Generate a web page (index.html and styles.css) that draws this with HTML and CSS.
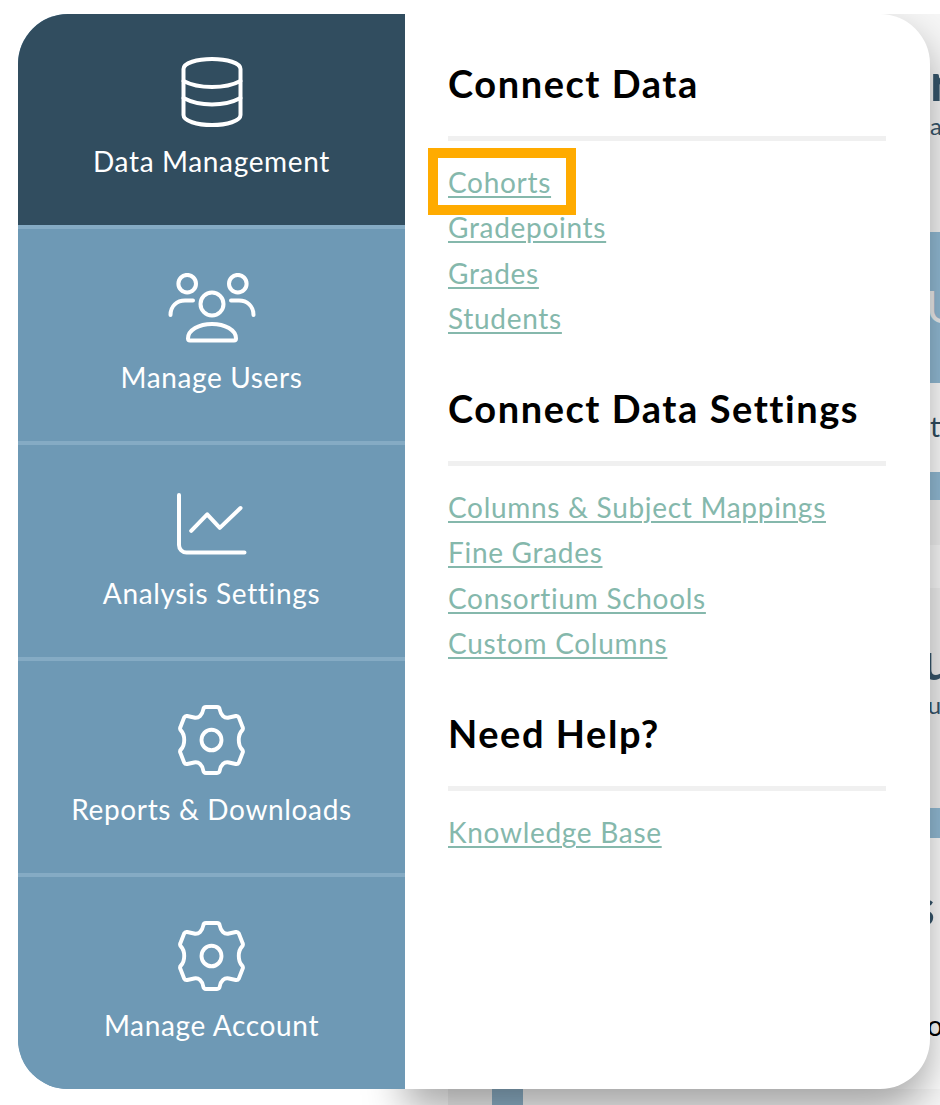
FILE: index.html
```html
<!DOCTYPE html>
<html lang="en">
<head>
    <meta charset="UTF-8">
    <title>Data Management Menu</title>
    <link rel="stylesheet" href="styles.css">
</head>
<body>
    <!-- page behind the menu, only a sliver shows on the right -->
    <div class="behind">
        <div class="strip strip-top">
            <div class="behind-title">r</div>
            <div class="behind-sub">a</div>
        </div>
        <div class="strip strip-band strip-hero"><span class="behind-hero">U</span></div>
        <div class="strip strip-white strip-ti"><span class="behind-text">ti</span></div>
        <div class="strip strip-band strip-thin"></div>
        <div class="strip strip-grey strip-gap"></div>
        <div class="strip strip-light strip-row"></div>
        <div class="strip strip-grey strip-stats">
            <div class="behind-title">u</div>
            <div class="behind-sub">lu</div>
        </div>
        <div class="strip strip-band strip-thin2"></div>
        <div class="strip strip-white strip-last">
            <div class="behind-title">s</div>
            <div class="behind-black">o</div>
        </div>
        <div class="behind-foot">
            <div class="foot-white"></div>
            <div class="foot-grey"></div>
            <div class="foot-blue"></div>
        </div>
    </div>

    <svg class="defs" width="0" height="0">
        <symbol id="icon-gear" viewBox="0 0 90 70">
            <g transform="translate(44.500 35) scale(.97 1)">
                <path d="M-5.5-33H5.5a3 3 0 0 1 3 2.5C9.5-25 13-21.5 18-22.5L25-24a3 3 0 0 1 3.2 1.5L32-13a3 3 0 0 1-.5 3.500C27-5 27 5 31.500 9.500a3 3 0 0 1 .5 3.500L28.200 22.500a3 3 0 0 1-3.200 1.500L18 22.500C13 21.500 9.500 25 8.500 30.500a3 3 0 0 1-3 2.500H-5.500a3 3 0 0 1-3-2.500C-9.500 25-13 21.500-18 22.500L-25 24a3 3 0 0 1-3.200-1.500L-32 13a3 3 0 0 1 .5-3.500C-27 5-27-5-31.500-9.500a3 3 0 0 1-.5-3.500L-28.200-22.500a3 3 0 0 1 3.200-1.500L-18-22.500C-13-21.500-9.500-25-8.500-30.500a3 3 0 0 1 3-2.500z"/>
                <circle cx="0" cy="0" r="10.300"/>
            </g>
        </symbol>
    </svg>

    <div class="menu">
        <nav class="side">
            <a class="side-item active" href="#">
                <svg class="side-icon" viewBox="0 0 90 70">
                    <path d="M16.500 12C16.500 6 30 2 45 2S73.500 6 73.500 12V58C73.500 64 60 68 45 68S16.500 64 16.500 58Z"/>
                    <path d="M16.500 24C24 28 34 30 45 30S66 28 73.500 24"/>
                    <path d="M16.500 41C24 45 34 47.500 45 47.500S66 45 73.500 41"/>
                </svg>
                <span>Data Management</span>
            </a>
            <a class="side-item" href="#">
                <svg class="side-icon" viewBox="0 0 90 70">
                    <circle cx="20.200" cy="10.700" r="8.800"/>
                    <circle cx="70.800" cy="10.700" r="8.800"/>
                    <circle cx="45" cy="31" r="11.500"/>
                    <path d="M23 67.500H67a2 2 0 0 0 2-2C69 57 58 51 45 51S21 57 21 65.500a2 2 0 0 0 2 2Z"/>
                    <path d="M3.500 42C3.500 33 10 27.500 18 27.500H26"/>
                    <path d="M64 27.500H72C80 27.500 86.500 33 86.500 42"/>
                </svg>
                <span>Manage Users</span>
            </a>
            <a class="side-item" href="#">
                <svg class="side-icon" viewBox="0 0 90 70">
                    <path d="M12 6V56a7.500 7.500 0 0 0 7.500 7.500H77.500"/>
                    <path d="M24.200 41.800L40.200 25.300L52.800 38.900L73.500 19"/>
                </svg>
                <span>Analysis Settings</span>
            </a>
            <a class="side-item" href="#">
                <svg class="side-icon"><use href="#icon-gear"/></svg>
                <span>Reports &amp; Downloads</span>
            </a>
            <a class="side-item" href="#">
                <svg class="side-icon"><use href="#icon-gear"/></svg>
                <span>Manage Account</span>
            </a>
        </nav>

        <div class="content">
            <section class="group">
                <h2>Connect Data</h2>
                <ul>
                    <li class="marked"><a href="#">Cohorts</a><div class="marker"></div></li>
                    <li><a href="#">Gradepoints</a></li>
                    <li><a href="#">Grades</a></li>
                    <li><a href="#">Students</a></li>
                </ul>
            </section>
            <section class="group">
                <h2>Connect Data Settings</h2>
                <ul>
                    <li><a href="#">Columns &amp; Subject Mappings</a></li>
                    <li><a href="#">Fine Grades</a></li>
                    <li><a href="#">Consortium Schools</a></li>
                    <li><a href="#">Custom Columns</a></li>
                </ul>
            </section>
            <section class="group">
                <h2>Need Help?</h2>
                <ul>
                    <li><a href="#">Knowledge Base</a></li>
                </ul>
            </section>
        </div>
    </div>
</body>
</html>
```

FILE: styles.css
```css
/* Base */
* {
    margin: 0;
    padding: 0;
    box-sizing: border-box;
}

html, body {
    height: 1105px;
    overflow: hidden;
}

body {
    position: relative;
    background: #ffffff;
    font-family: 'Lato', 'Noto Sans', sans-serif;
    padding: 14px 0 0 18px;
}

.defs {
    position: absolute;
}

/* Page behind the menu */
.behind {
    position: absolute;
    left: 405px;
    right: 0;
    top: 14px;
    bottom: 0;
    overflow: hidden;
    display: flex;
    flex-direction: column;
    z-index: 0;
}

.strip {
    padding-left: 525px;
    white-space: nowrap;
    overflow: hidden;
    flex: none;
}

.strip-top {
    height: 218px;
    background: #f6f6f6;
    padding-top: 37px;
}

.strip-band { background: #93bcd6; }
.strip-white { background: #ffffff; }
.strip-grey { background: #f2f2f2; }
.strip-light { background: #fbfbfb; }

.strip-hero {
    height: 151px;
    padding-left: 521px;
    padding-top: 49px;
}

.strip-ti { height: 89px; padding-top: 26px; }
.strip-thin { height: 28px; }
.strip-gap { height: 45px; }
.strip-row { height: 43px; }
.strip-stats { height: 220px; padding-top: 42px; padding-left: 517px; }
.strip-thin2 { height: 30px; }
.strip-last { height: 251px; padding-top: 38px; padding-left: 507px; }

.behind-title {
    font-size: 52px;
    line-height: 60px;
    font-weight: 700;
    color: #36566c;
}

.behind-sub {
    font-size: 24px;
    line-height: 30px;
    color: #36566c;
}

.behind-hero {
    font-size: 44px;
    line-height: 50px;
    color: #f0f0f0;
}

.behind-text {
    font-size: 28px;
    line-height: 34px;
    color: #2f4d60;
}

.behind-black {
    font-size: 28px;
    line-height: 34px;
    color: #000000;
    margin-top: 72px;
    padding-left: 15px;
}

.behind-foot {
    display: flex;
    height: 16px;
    background: #f8f8f8;
    flex: none;
}

.foot-white { width: 43px; background: #ffffff; }
.foot-grey { width: 44px; background: #f2f2f2; }
.foot-blue { width: 31px; background: #8fb2c9; }

/* Menu */
.menu {
    position: relative;
    z-index: 1;
    display: flex;
    width: 912px;
    height: 1075px;
}

.side {
    position: relative;
    z-index: 2;
    width: 387px;
    display: flex;
    flex-direction: column;
    background: #6e99b5;
    border-radius: 50px 0 0 50px;
    overflow: hidden;
}

.side-item {
    height: 216px;
    padding-top: 44px;
    display: flex;
    flex-direction: column;
    align-items: center;
    color: #ffffff;
    text-decoration: none;
    font-size: 28px;
    line-height: 30px;
    letter-spacing: 0.65px;
    background: #6e99b5;
    border-bottom: 4px solid #85abc4;
}

.side-item:first-child {
    height: 215px;
    padding-top: 43px;
}

.side-item:last-child {
    height: 212px;
    border-bottom: none;
}

.side-item.active {
    background: #314d5f;
}

.side-icon {
    width: 90px;
    height: 70px;
    margin-bottom: 19px;
    fill: none;
    stroke: #ffffff;
    stroke-width: 4;
    stroke-linecap: round;
    stroke-linejoin: round;
}

.side-item span {
    display: block;
}

/* Right side */
.content {
    flex: 1;
    background: #ffffff;
    border-radius: 0 50px 50px 0;
    padding: 0 44px 0 43px;
    box-shadow: 0 20px 40px rgba(0,0,0,0.35);
    clip-path: inset(0 -70px -70px -70px);
}

.group {
    height: 325px;
    padding-top: 43px;
}

h2 {
    font-size: 38px;
    line-height: 52px;
    font-weight: 700;
    letter-spacing: 1.55px;
    color: #000000;
    border-bottom: 5px solid #f0f0f0;
    height: 84px;
    padding-bottom: 32px;
    margin-bottom: 19px;
}

ul {
    list-style: none;
}

li {
    height: 45.300px;
    font-size: 28px;
    line-height: 45px;
    letter-spacing: 0.7px;
    position: relative;
}

li a {
    color: #85b8ac;
    text-decoration: underline;
    text-decoration-thickness: 2px;
    text-underline-offset: 3px;
}

/* Orange box around the first link */
.marker {
    position: absolute;
    left: -20px;
    top: -12px;
    width: 148px;
    height: 67px;
    border: 10px solid #ffab00;
}
```
